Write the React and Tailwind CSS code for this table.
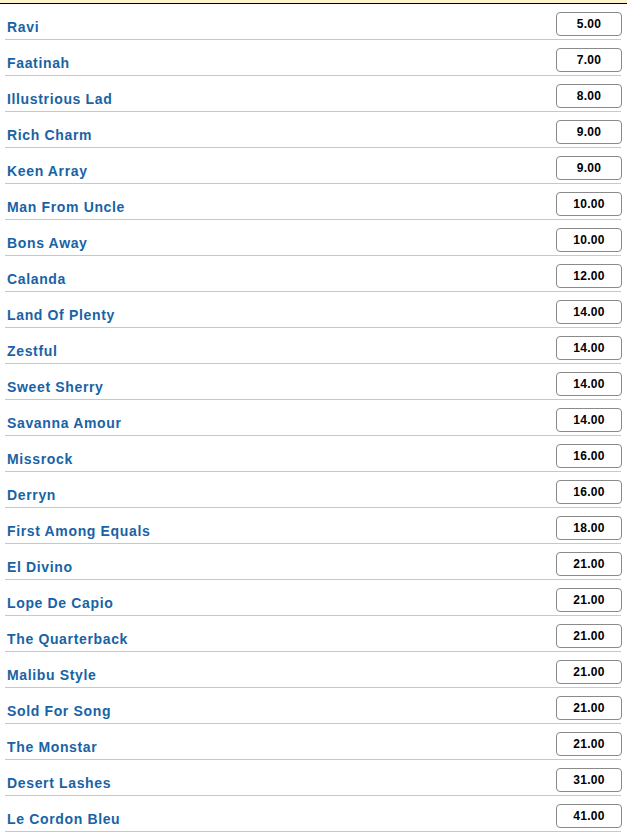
import React from 'react';

const runners = [
  ['Ravi', '5.00'],
  ['Faatinah', '7.00'],
  ['Illustrious Lad', '8.00'],
  ['Rich Charm', '9.00'],
  ['Keen Array', '9.00'],
  ['Man From Uncle', '10.00'],
  ['Bons Away', '10.00'],
  ['Calanda', '12.00'],
  ['Land Of Plenty', '14.00'],
  ['Zestful', '14.00'],
  ['Sweet Sherry', '14.00'],
  ['Savanna Amour', '14.00'],
  ['Missrock', '16.00'],
  ['Derryn', '16.00'],
  ['First Among Equals', '18.00'],
  ['El Divino', '21.00'],
  ['Lope De Capio', '21.00'],
  ['The Quarterback', '21.00'],
  ['Malibu Style', '21.00'],
  ['Sold For Song', '21.00'],
  ['The Monstar', '21.00'],
  ['Desert Lashes', '31.00'],
  ['Le Cordon Bleu', '41.00'],
];

export default function App() {
  return (
    <div className="min-h-[837px] bg-white font-['Liberation_Sans',Arial,sans-serif]">
      {/* top strip */}
      <div className="h-[3px] bg-[#fdf3cc] border-b border-black box-content" />

      <ul>
        {runners.map(([name, price]) => (
          <li
            key={name}
            className="ml-[5px] mr-[6px] h-[36px] flex justify-between border-b border-[#c8c8c8]"
          >
            <span className="pl-[2px] pt-[15px] text-[14px] leading-4 tracking-[0.65px] font-bold text-[#1863a6]">
              {name}
            </span>
            <span className="mt-[8px] -mr-px h-[24px] w-[66px] flex items-center justify-center rounded-[4px] border border-[#8a8a8a] text-[12px] tracking-[0.3px] font-bold text-black">
              {price}
            </span>
          </li>
        ))}
      </ul>
    </div>
  );
}
